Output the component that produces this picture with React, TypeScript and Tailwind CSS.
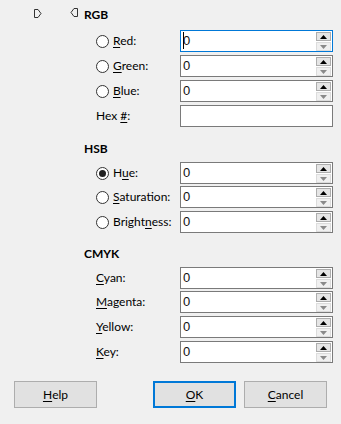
import React from "react";

type FieldProps = {
  value?: string;
  focused?: boolean;
  spin?: boolean;
};

function Field({ value = "0", focused = false, spin = true }: FieldProps) {
  return (
    <div
      className={`relative h-[22px] w-[153px] bg-white border ${
        focused ? "border-[#0078d7]" : "border-[#7a7a7a]"
      }`}
    >
      {spin && (
        <span className="absolute left-[2px] top-0 leading-[20px] text-[13px] text-[#111] font-['Liberation_Sans',sans-serif]">
          {value}
        </span>
      )}
      {focused && <span className="absolute left-[2px] top-[1px] h-[17px] w-px bg-black" />}
      {spin && (
        <div className="absolute right-[1px] top-[1px] flex w-[15px] flex-col gap-px">
          <div className="flex h-[9px] items-center justify-center border border-[#adadad] bg-[#e5e5e5]">
            <svg width="7" height="4" viewBox="0 0 7 4">
              <path d="M0 4 L3.5 0 L7 4 Z" fill="#000" />
            </svg>
          </div>
          <div className="flex h-[9px] items-center justify-center border border-[#dcdcdc] bg-[#f0f0f0]">
            <svg width="7" height="4" viewBox="0 0 7 4">
              <path d="M0 0 L7 0 L3.5 4 Z" fill="#8a8a8a" />
            </svg>
          </div>
        </div>
      )}
    </div>
  );
}

function Radio({ checked = false }: { checked?: boolean }) {
  return (
    <span className="mr-[4px] flex h-[13px] w-[13px] items-center justify-center rounded-full border border-[#333] bg-white">
      {checked && <span className="h-[7px] w-[7px] rounded-full bg-[#222]" />}
    </span>
  );
}

type RowProps = {
  radio?: boolean;
  checked?: boolean;
  pre: string;
  key_: string;
  post: string;
  field?: React.ReactNode;
  className?: string;
};

function Row({ radio, checked, pre, key_, post, field, className = "" }: RowProps) {
  return (
    <div className={`flex h-[22px] items-center ${className}`}>
      <div className="flex w-[180px] items-center pl-[96px]">
        {radio && <Radio checked={checked} />}
        <span>
          {pre}
          <u className="underline-offset-2">{key_}</u>
          {post}
        </span>
      </div>
      {field ?? <Field />}
    </div>
  );
}

function Heading({ children, className = "" }: { children: React.ReactNode; className?: string }) {
  return (
    <div className={`flex h-[20px] items-center pl-[84px] font-bold ${className}`}>{children}</div>
  );
}

function Btn({ pre, k, post, primary }: { pre: string; k: string; post: string; primary?: boolean }) {
  return (
    <button
      className={`flex h-[27px] w-[83px] items-center justify-center bg-[#e1e1e1] ${
        primary ? "border-2 border-[#0078d7]" : "border border-[#adadad]"
      }`}
    >
      {pre}
      <u className="underline-offset-2">{k}</u>
      {post}
    </button>
  );
}

export default function App() {
  return (
    <div className="h-[424px] w-[341px] overflow-hidden bg-[#f0f0f0] text-[12px] text-black font-['Lato','Noto_Sans',sans-serif]">
      <div className="relative mt-[5px] flex h-[20px] items-center pl-[84px] font-bold">
        <svg className="absolute left-[34px] top-[4px]" width="8" height="9" viewBox="0 0 8 9">
          <path d="M0.5 0.5 H4 L7 4.5 L4 8.5 H0.5 Z" fill="none" stroke="#333" strokeWidth="1" />
        </svg>
        <svg className="absolute left-[70px] top-[3px]" width="8" height="9" viewBox="0 0 8 9">
          <path d="M7.5 0.5 H4 L1 4.5 L4 8.5 H7.5 Z" fill="none" stroke="#333" strokeWidth="1" />
        </svg>
        RGB
      </div>

      <Row className="mt-[5px]" radio pre="" key_="R" post="ed:" field={<Field focused />} />
      <Row className="mt-[3px]" radio pre="" key_="G" post="reen:" />
      <Row className="mt-[3px]" radio pre="" key_="B" post="lue:" />
      <Row className="mt-[3px]" pre="Hex " key_="#" post=":" field={<Field value="" spin={false} />} />

      <Heading className="mt-[12px]">HSB</Heading>
      <Row className="mt-[3px]" radio checked pre="H" key_="u" post="e:" />
      <Row className="mt-[2px]" radio pre="" key_="S" post="aturation:" />
      <Row className="mt-[3px]" radio pre="Bright" key_="n" post="ess:" />

      <Heading className="mt-[11px]">CMYK</Heading>
      <Row className="mt-[3px]" pre="" key_="C" post="yan:" />
      <Row className="mt-[2px]" pre="" key_="M" post="agenta:" />
      <Row className="mt-[3px]" pre="" key_="Y" post="ellow:" />
      <Row className="mt-[3px]" pre="" key_="K" post="ey:" />

      <div className="mt-[18px] flex pl-[14px]">
        <Btn pre="" k="H" post="elp" />
        <div className="ml-[56px]">
          <Btn pre="" k="O" post="K" primary />
        </div>
        <div className="ml-[8px]">
          <Btn pre="" k="C" post="ancel" />
        </div>
      </div>
    </div>
  );
}
